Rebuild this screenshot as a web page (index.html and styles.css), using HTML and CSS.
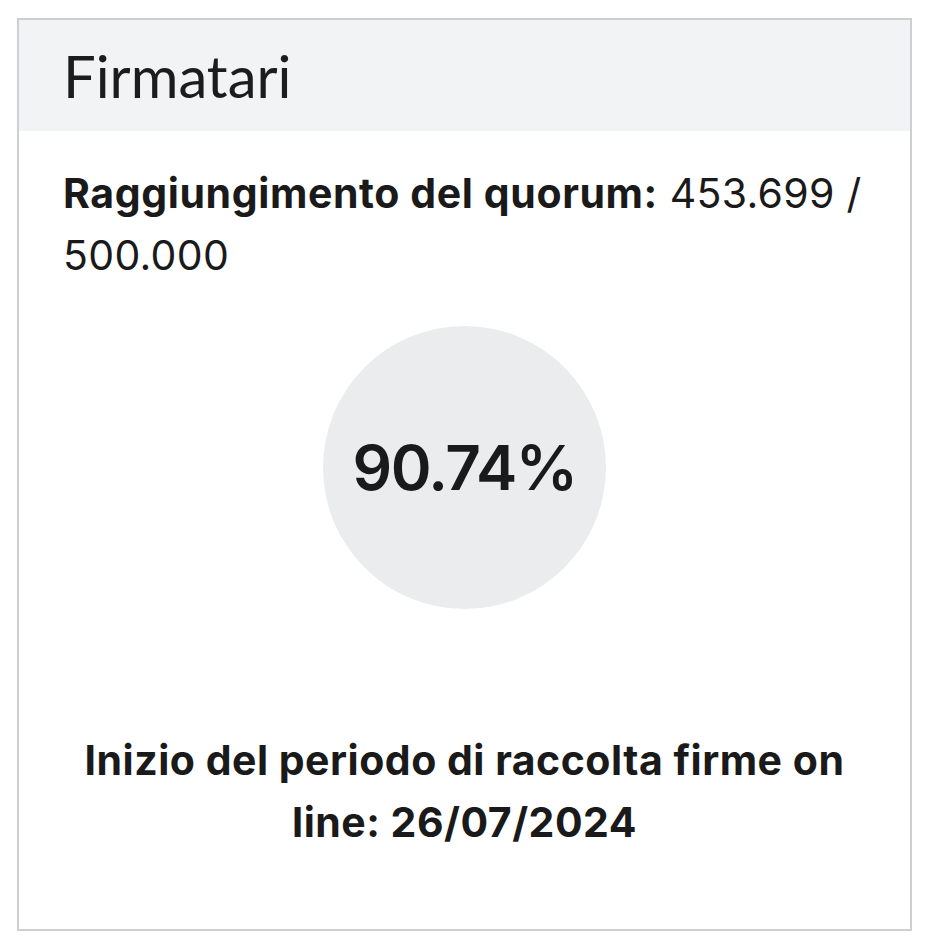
FILE: index.html
```html
<!DOCTYPE html>
<html lang="it">
<head>
    <meta charset="UTF-8">
    <meta name="viewport" content="width=device-width, initial-scale=1.0">
    <title>Firmatari</title>
    <link rel="stylesheet" href="styles.css">
</head>
<body>
    <div class="card">
        <div class="card-header">
            <h2>Firmatari</h2>
        </div>

        <div class="card-body">
            <p class="quorum">
                <strong>Raggiungimento del quorum:</strong> 453.699 / 500.000
            </p>

            <div class="progress-circle">
                <span>90.74%</span>
            </div>

            <p class="start-date">
                Inizio del periodo di raccolta firme on line: 26/07/2024
            </p>
        </div>
    </div>
</body>
</html>
```

FILE: styles.css
```css
body {
    margin: 0;
    padding: 18px 21px 17px 17px;
    background: #fff;
    color: #1a1a1a;
    font-family: Inter, "Liberation Sans", sans-serif;
}

.card {
    border: 2px solid #cdcfd2;
    background: #fff;
}

.card-header {
    background: #f2f3f5;
    height: 111px;
    padding: 0 44px;
    display: flex;
    align-items: center;
}

.card-header h2 {
    margin: 0;
    font-family: Lato, "Open Sans", sans-serif;
    font-weight: 400;
    font-size: 58px;
    color: #1c1c1c;
}

.card-body {
    padding: 31px 44px 76px 44px;
}

.quorum {
    margin: 0;
    font-size: 41px;
    line-height: 62px;
    letter-spacing: 0.3px;
}

.quorum strong {
    font-weight: 700;
    letter-spacing: 0.6px;
}

.progress-circle {
    width: 283px;
    height: 283px;
    border-radius: 50%;
    background: #ebecee;
    margin: 40px auto 0;
    display: flex;
    align-items: center;
    justify-content: center;
}

.progress-circle span {
    font-size: 62px;
    font-weight: 600;
    letter-spacing: -1.5px;
}

.start-date {
    margin: 120px 0 0;
    text-align: center;
    font-size: 41px;
    font-weight: 700;
    line-height: 62px;
    letter-spacing: 0.5px;
}
```
